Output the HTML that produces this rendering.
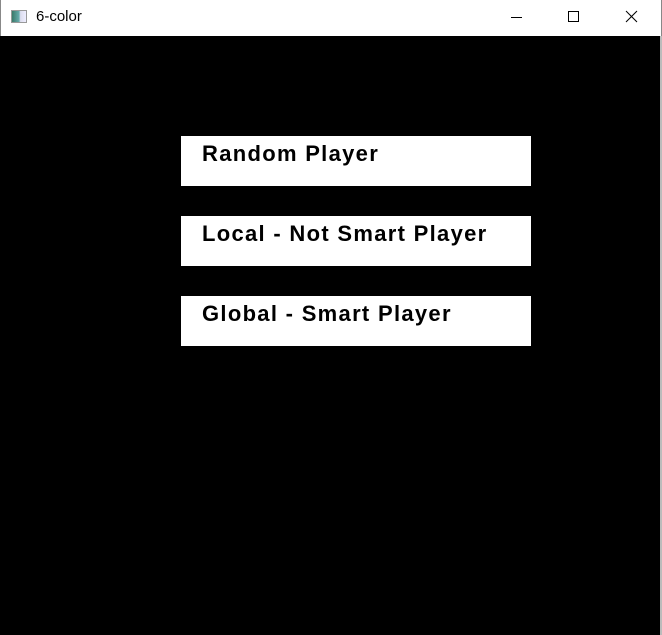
<!DOCTYPE html>
<html><head><meta charset="utf-8"><style>
*{margin:0;padding:0;box-sizing:border-box}
body{width:662px;height:635px;overflow:hidden;background:#000;position:relative;font-family:"Liberation Sans",sans-serif}
#tb{position:absolute;left:0;top:0;width:662px;height:36px;background:#fff;border-left:1px solid #888;border-right:1px solid #888}
#title{position:absolute;left:35px;top:8px;font-size:15px;color:#000}
#ic{position:absolute;left:10px;top:10px;width:16px;height:13px;border:1px solid #999;background:linear-gradient(90deg,#3a7a6a 0,#6aa 50%,#dde 60%,#eef 100%)}
#body{position:absolute;left:0;top:36px;width:660px;height:599px;background:#000}
#edge{position:absolute;left:660px;top:36px;width:2px;height:599px;background:#bbb}
.b{position:absolute;left:181px;width:350px;height:50px;background:#fff}
.b span{position:absolute;left:21px;top:5px;font-weight:bold;font-size:22px;letter-spacing:1.3px;color:#000}
</style></head><body>
<div id="tb"><div id="ic"></div><div id="title">6-color</div>
<svg style="position:absolute;left:500px;top:6px" width="150" height="24">
<line x1="10" y1="11.5" x2="21" y2="11.5" stroke="#000" stroke-width="1"/>
<rect x="67.5" y="5.5" width="10" height="10" fill="none" stroke="#000" stroke-width="1"/>
<line x1="125" y1="5" x2="136" y2="16" stroke="#000" stroke-width="1"/>
<line x1="136" y1="5" x2="125" y2="16" stroke="#000" stroke-width="1"/>
</svg></div>
<div id="body"></div><div id="edge"></div>
<div class="b" style="top:136px"><span>Random Player</span></div>
<div class="b" style="top:216px"><span>Local - Not Smart Player</span></div>
<div class="b" style="top:296px"><span>Global - Smart Player</span></div>
</body></html>
